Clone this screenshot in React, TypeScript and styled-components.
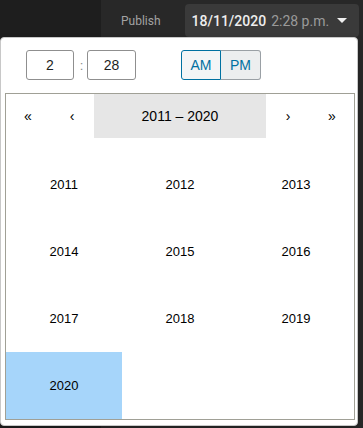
import React from "react";
import styled, { createGlobalStyle } from "styled-components";

const GlobalStyle = createGlobalStyle`
  html, body {
    margin: 0;
    padding: 0;
    background: #282828;
  }
  * {
    box-sizing: border-box;
  }
`;

const years = [2011, 2012, 2013, 2014, 2015, 2016, 2017, 2018, 2019, 2020];
const ACTIVE_YEAR = 2020;

function App() {
  return (
    <>
      <GlobalStyle />
      <StyledPage>
        <StyledSidebar />
        <StyledMain>
          <StyledHeader>
            <StyledLabel>Publish</StyledLabel>
            <StyledDateButton>
              <StyledDate>18/11/2020</StyledDate>
              <StyledTime>2:28 p.m.</StyledTime>
              <StyledCaret />
            </StyledDateButton>
          </StyledHeader>
        </StyledMain>

        <StyledPopover>
          <StyledTimeRow>
            <StyledTimeInput value="2" readOnly />
            <StyledColon>:</StyledColon>
            <StyledTimeInput value="28" readOnly $wide />
            <StyledPeriodGroup>
              <StyledPeriodButton $active>AM</StyledPeriodButton>
              <StyledPeriodButton>PM</StyledPeriodButton>
            </StyledPeriodGroup>
          </StyledTimeRow>

          <StyledCalendar>
            <StyledNav>
              <StyledNavArrow>«</StyledNavArrow>
              <StyledNavArrow>‹</StyledNavArrow>
              <StyledNavLabel>2011 – 2020</StyledNavLabel>
              <StyledNavArrow>›</StyledNavArrow>
              <StyledNavArrow>»</StyledNavArrow>
            </StyledNav>
            <StyledYearGrid>
              {years.map((year) => (
                <StyledTile key={year} $active={year === ACTIVE_YEAR}>
                  {year}
                </StyledTile>
              ))}
            </StyledYearGrid>
          </StyledCalendar>
        </StyledPopover>
      </StyledPage>
    </>
  );
}

export default App;

const StyledPage = styled.div`
  position: relative;
  display: grid;
  grid-template-columns: 101px 1fr;
  width: 100%;
  height: 428px;
  font-family: Roboto, "Liberation Sans", sans-serif;
`;

const StyledSidebar = styled.div`
  background: #1e1e1e;
`;

const StyledMain = styled.div`
  background: #282828;
`;

const StyledHeader = styled.div`
  display: flex;
  align-items: center;
  gap: 24px;
  height: 33px;
  margin-top: 4px;
  padding-left: 20px;
`;

const StyledLabel = styled.span`
  font-size: 12px;
  color: #a3a3a3;
  padding-top: 1px;
`;

const StyledDateButton = styled.div`
  display: flex;
  align-items: center;
  height: 33px;
  padding: 0 12px 0 7px;
  background: #3a3a3a;
  border-radius: 4px;
  font-size: 14px;
`;

const StyledDate = styled.span`
  color: #eeeeee;
  font-weight: 500;
`;

const StyledTime = styled.span`
  color: #9a9a9a;
  margin-left: 5px;
`;

const StyledCaret = styled.span`
  width: 0;
  height: 0;
  margin-left: 8px;
  border-left: 5px solid transparent;
  border-right: 5px solid transparent;
  border-top: 5px solid #f0f0f0;
`;

const StyledPopover = styled.div`
  position: absolute;
  top: 37px;
  left: 0;
  width: 358px;
  height: 389px;
  padding: 12px 2px 3px 4px;
  background: #fff;
  border: 1px solid #c8c8c8;
  border-radius: 4px;
  box-shadow: 0 2px 6px rgba(0, 0, 0, 0.2);
`;

const StyledTimeRow = styled.div`
  display: flex;
  align-items: center;
  height: 30px;
  margin-bottom: 13px;
  padding-left: 21px;
`;

const StyledTimeInput = styled.input<{ $wide?: boolean }>`
  width: ${(props) => (props.$wide ? "49px" : "48px")};
  height: 30px;
  padding: 0;
  border: 1px solid #8f8f8f;
  border-radius: 3px;
  background: #fff;
  font-family: "Liberation Sans", Arial, sans-serif;
  font-size: 14px;
  color: #1e1e1e;
  text-align: center;
  outline: none;
`;

const StyledColon = styled.span`
  width: 13px;
  padding-left: 2px;
  text-align: center;
  font-family: "Liberation Sans", Arial, sans-serif;
  font-size: 13px;
  color: #8a8a8a;
`;

const StyledPeriodGroup = styled.div`
  display: flex;
  margin-left: 45px;
`;

const StyledPeriodButton = styled.button<{ $active?: boolean }>`
  width: 40px;
  height: 30px;
  padding: 0;
  margin: 0;
  font-family: "Liberation Sans", Arial, sans-serif;
  font-size: 14px;
  color: #0071a1;
  background: ${(props) => (props.$active ? "#f3f5f6" : "#eceeef")};
  border: 1px solid ${(props) => (props.$active ? "#0071a1" : "#9aa0a5")};
  border-radius: ${(props) => (props.$active ? "3px 0 0 3px" : "0 3px 3px 0")};
  ${(props) => (props.$active ? "" : "border-left: none;")}
`;

const StyledCalendar = styled.div`
  width: 350px;
  border: 1px solid #a0a096;
  background: #fff;
  font-family: "Liberation Sans", Arial, sans-serif;
  line-height: 1.125em;
  color: #000;
`;

const StyledNav = styled.div`
  display: grid;
  grid-template-columns: 44px 44px 1fr 44px 44px;
  height: 44px;
  margin-bottom: 13px;
`;

const StyledNavArrow = styled.div`
  display: flex;
  align-items: center;
  justify-content: center;
  font-size: 14px;
  color: #000;
`;

const StyledNavLabel = styled.div`
  display: flex;
  align-items: center;
  justify-content: center;
  background: #e6e6e6;
  font-size: 14px;
`;

const StyledYearGrid = styled.div`
  display: grid;
  grid-template-columns: repeat(3, 1fr);
  grid-auto-rows: 67px;
`;

const StyledTile = styled.div<{ $active?: boolean }>`
  display: flex;
  align-items: center;
  justify-content: center;
  font-size: 13px;
  background: ${(props) => (props.$active ? "#a6d5fa" : "transparent")};
`;
